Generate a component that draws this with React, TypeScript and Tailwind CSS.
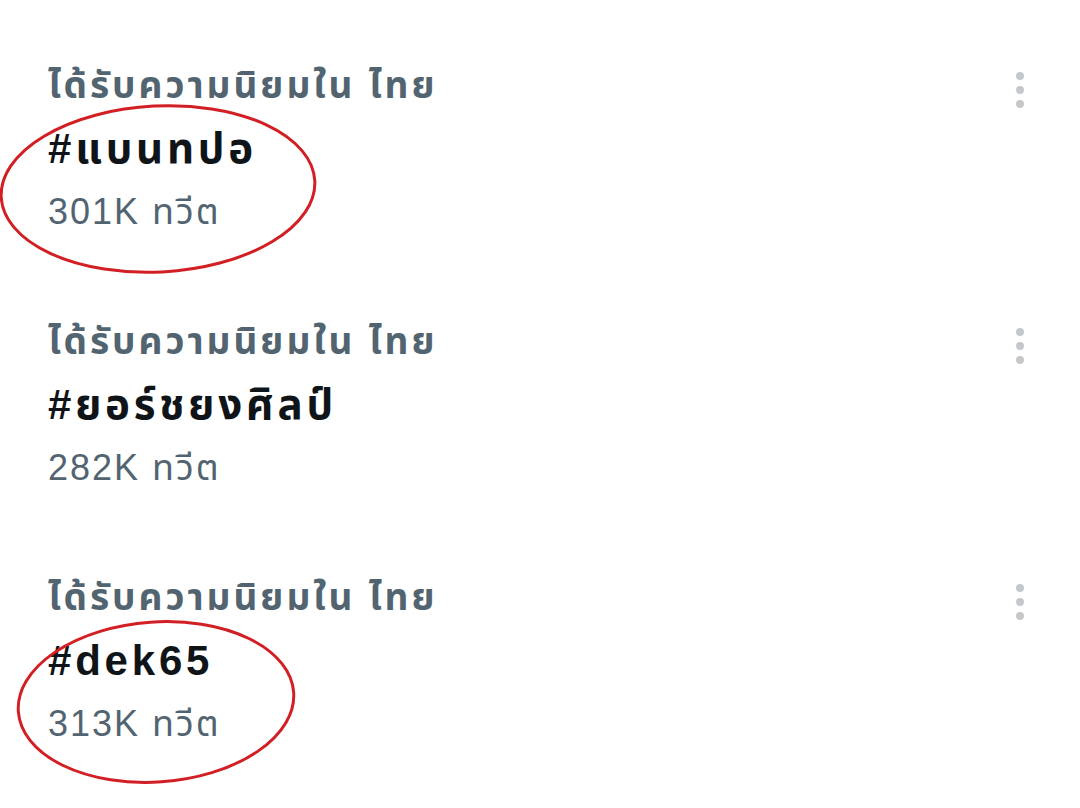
const trends = [
  { label: "ได้รับความนิยมใน ไทย", tag: "#แบนทปอ", count: "301K ทวีต" },
  { label: "ได้รับความนิยมใน ไทย", tag: "#ยอร์ชยงศิลป์", count: "282K ทวีต" },
  { label: "ได้รับความนิยมใน ไทย", tag: "#dek65", count: "313K ทวีต" },
];

function Dots() {
  return (
    <div className="flex flex-col items-center gap-[6px] pt-[18px]">
      <span className="w-[8px] h-[8px] rounded-full bg-[#c4c8cc]" />
      <span className="w-[8px] h-[8px] rounded-full bg-[#c4c8cc]" />
      <span className="w-[8px] h-[8px] rounded-full bg-[#c4c8cc]" />
    </div>
  );
}

export default function App() {
  return (
    <div
      className="relative w-[1080px] h-[808px] bg-white overflow-hidden"
      style={{ fontFamily: '"Liberation Sans", "Noto Sans Thai", sans-serif' }}
    >
      {trends.map((t, i) => (
        <div key={i} className="flex justify-between h-[256px] pt-[54px] pl-[48px] pr-[56px]">
          <div className="flex flex-col">
            <div className="h-[63px] leading-[63px] text-[37px] tracking-[3px] font-bold text-[#536471]">{t.label}</div>
            <div className="h-[63px] leading-[63px] text-[42px] tracking-[3.8px] font-bold text-[#0f1419]">{t.tag}</div>
            <div className="h-[63px] leading-[63px] text-[36px] tracking-[2px] text-[#536471]">{t.count}</div>
          </div>
          <Dots />
        </div>
      ))}

      {/* red marker circles */}
      <svg className="absolute inset-0 pointer-events-none" width="1080" height="808">
        <ellipse cx="158" cy="189" rx="157" ry="83" fill="none" stroke="#d21f24" strokeWidth="3" transform="rotate(-3 158 189)" />
        <ellipse cx="156" cy="702" rx="138" ry="80" fill="none" stroke="#d21f24" strokeWidth="3" transform="rotate(-4 156 702)" />
      </svg>
    </div>
  );
}
